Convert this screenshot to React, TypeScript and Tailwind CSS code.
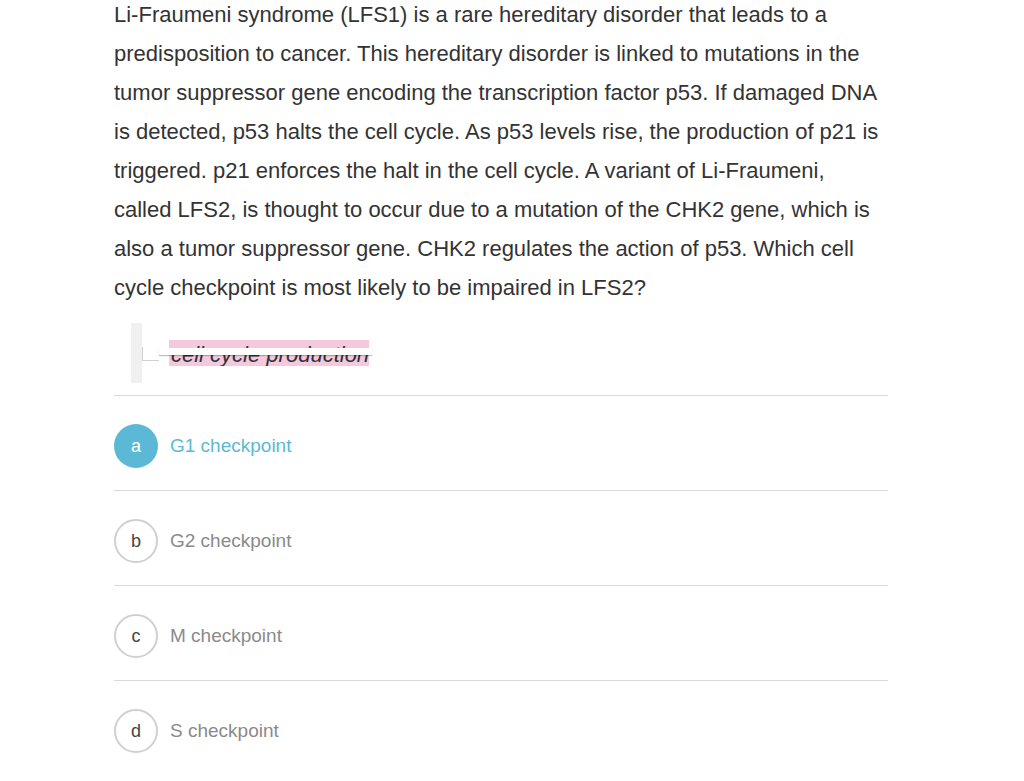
import React from 'react';

const question =
  'Li-Fraumeni syndrome (LFS1) is a rare hereditary disorder that leads to a predisposition to cancer. This hereditary disorder is linked to mutations in the tumor suppressor gene encoding the transcription factor p53. If damaged DNA is detected, p53 halts the cell cycle. As p53 levels rise, the production of p21 is triggered. p21 enforces the halt in the cell cycle. A variant of Li-Fraumeni, called LFS2, is thought to occur due to a mutation of the CHK2 gene, which is also a tumor suppressor gene. CHK2 regulates the action of p53. Which cell cycle checkpoint is most likely to be impaired in LFS2?';

const options = [
  { key: 'a', label: 'G1 checkpoint', selected: true },
  { key: 'b', label: 'G2 checkpoint', selected: false },
  { key: 'c', label: 'M checkpoint', selected: false },
  { key: 'd', label: 'S checkpoint', selected: false },
];

export default function App() {
  return (
    <div className="min-h-[781px] bg-white font-['Liberation_Sans',Arial,sans-serif]">
      <div className="ml-[114px] w-[774px]">
        <p className="mt-[-5px] text-[22px] leading-[39px] text-[#333]">{question}</p>

        {/* scribbled note */}
        <div className="flex h-[88px] items-start pt-[16px] pl-[17px]">
          <div className="h-[60px] w-[11px] bg-[#f0f0f0]" />
          <div className="mt-[24px] h-[14px] w-[17px] border-b border-l border-[#d0d0d0] bg-white" />
          <div className="relative ml-[10px] mt-[17px] h-[26px] w-[200px] bg-[#f4c9de]">
            <div className="h-full overflow-hidden">
              <span className="block whitespace-nowrap pl-[2px] pt-[2px] text-[22px] italic leading-[26px] text-[#333]">
                cell cycle production
              </span>
            </div>
            <div className="absolute left-[-10px] top-[8px] h-[7px] w-[213px] bg-white shadow-[0_1px_1px_rgba(0,0,0,0.25)]" />
          </div>
        </div>

        <div>
          {options.map((o) => (
            <div key={o.key} className="flex items-center border-t border-[#d9d9d9] pt-[28px] pb-[22px]">
              <div
                className={`flex h-[44px] w-[44px] items-center justify-center rounded-full text-[18px] ${
                  o.selected ? 'bg-[#5cb9d6] text-white' : 'border-2 border-[#d0d0d0] text-[#444]'
                }`}
              >
                {o.key}
              </div>
              <span className={`ml-[12px] text-[19px] ${o.selected ? 'text-[#5cb9d6]' : 'text-[#8a8a8a]'}`}>
                {o.label}
              </span>
            </div>
          ))}
        </div>
      </div>
    </div>
  );
}
